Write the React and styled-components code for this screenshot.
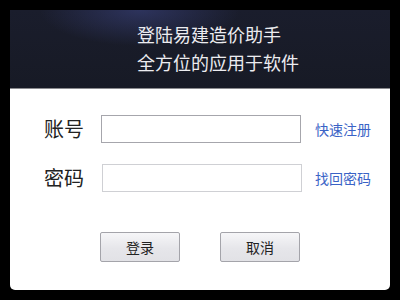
import React from "react";
import styled, { createGlobalStyle } from "styled-components";

const GlobalStyle = createGlobalStyle`
  html, body {
    margin: 0;
    padding: 0;
    background: #000;
  }
  body {
    font-family: "Noto Sans CJK SC", "Noto Sans", sans-serif;
  }
`;

const Panel = styled.div`
  margin: 10px;
  width: 380px;
  height: 280px;
  background: #fff;
  border-radius: 0 0 5px 5px;
  overflow: hidden;
  display: flex;
  flex-direction: column;
`;

const Header = styled.div`
  height: 79px;
  border-bottom: 1px solid #8a8a8e;
  background:
    radial-gradient(ellipse 100px 36px at 130px 0px, rgba(58, 66, 125, 0.6), rgba(40, 46, 90, 0) 100%),
    linear-gradient(180deg, #1a1d2c 0%, #171a25 100%);
  padding: 10px 0 0 127px;
  box-sizing: border-box;
  color: #ececf0;
  font-size: 18px;
  line-height: 28px;
`;

const HeaderLine = styled.div`
  white-space: nowrap;
`;

const Form = styled.div`
  display: grid;
  grid-template-columns: 43px 200px auto;
  column-gap: 14px;
  row-gap: 21px;
  align-items: center;
  padding: 26px 0 0 34px;
`;

const Label = styled.div`
  font-size: 20px;
  color: #222;
  line-height: 28px;
  white-space: nowrap;
`;

const Input = styled.input`
  box-sizing: border-box;
  width: 200px;
  height: 28px;
  margin: 0;
  margin-left: ${(p) => p.$shift || 0}px;
  border: 1px solid ${(p) => p.$border};
  border-radius: 0;
  background: #fff;
  outline: none;
`;

const Link = styled.a`
  font-size: 14px;
  color: #3a63c6;
  text-decoration: none;
  white-space: nowrap;
`;

const Buttons = styled.div`
  display: flex;
  gap: 40px;
  padding: 40px 0 0 90px;
`;

const Button = styled.button`
  box-sizing: border-box;
  width: 80px;
  height: 30px;
  border: 1px solid #a4a4aa;
  border-radius: 2px;
  background: linear-gradient(180deg, #f6f6f8 0%, #e6e6ea 55%, #e2e2e6 100%);
  font-family: "Noto Sans CJK SC", sans-serif;
  font-size: 14px;
  color: #222;
  padding: 0;
`;

export default function App() {
  return (
    <>
      <GlobalStyle />
      <Panel>
        <Header>
          <HeaderLine>登陆易建造价助手</HeaderLine>
          <HeaderLine>全方位的应用于软件</HeaderLine>
        </Header>
        <Form>
          <Label>账号</Label>
          <Input $border="#a6a6ac" />
          <Link href="#">快速注册</Link>
          <Label>密码</Label>
          <Input $border="#cfd0d4" $shift={1} />
          <Link href="#">找回密码</Link>
        </Form>
        <Buttons>
          <Button>登录</Button>
          <Button>取消</Button>
        </Buttons>
      </Panel>
    </>
  );
}
